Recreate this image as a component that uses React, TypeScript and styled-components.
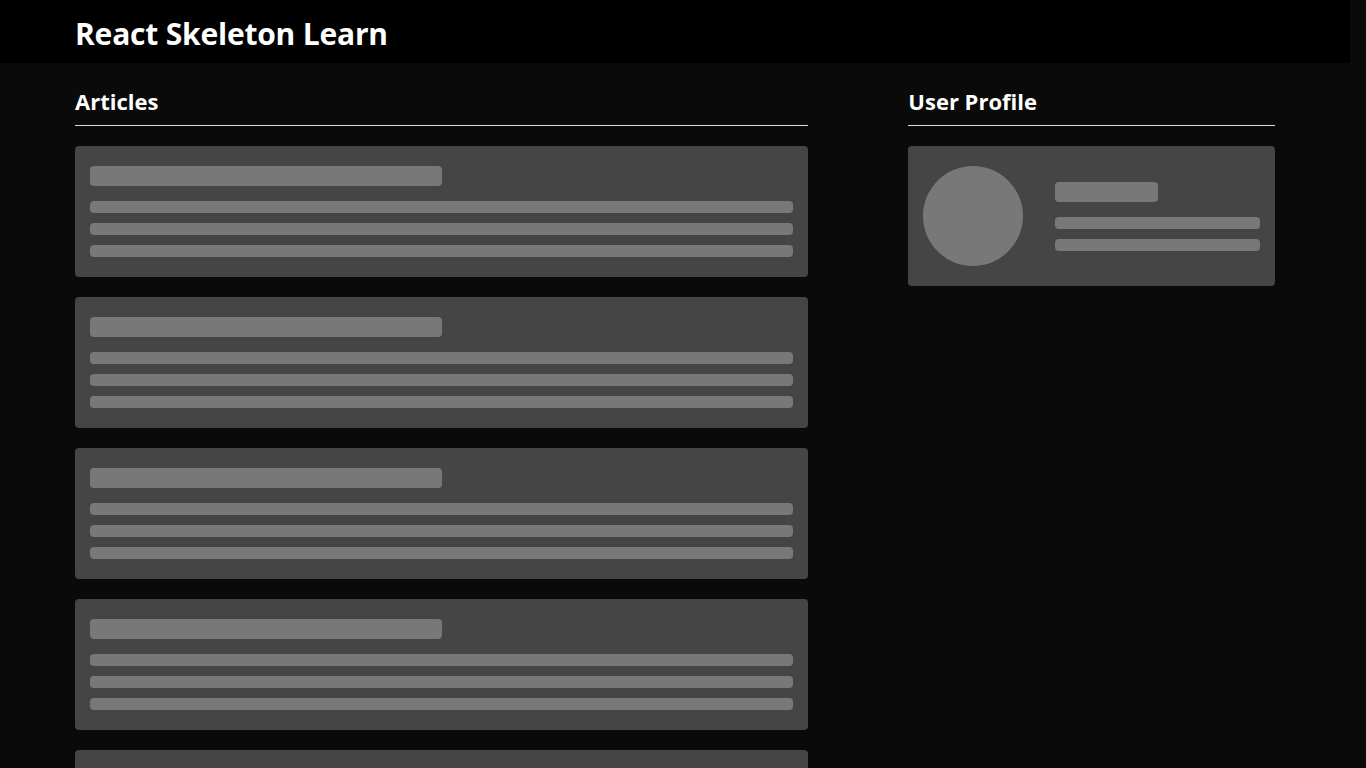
import * as React from "react";
import styled, { createGlobalStyle } from "styled-components";

const GlobalStyle = createGlobalStyle`
  html, body {
    margin: 0;
    padding: 0;
    background: #0a0a0a;
    color: #fff;
    font-family: "Open Sans", "Noto Sans", "Liberation Sans", sans-serif;
  }
`;

const ARTICLE_COUNT = 8;

function ArticleSkeleton() {
  return (
    <Card>
      <Bone $variant="title" />
      <Bone $variant="text" />
      <Bone $variant="text" />
      <Bone $variant="text" />
    </Card>
  );
}

function ProfileSkeleton() {
  return (
    <ProfileCard>
      <Bone $variant="avatar" />
      <ProfileInfo>
        <Bone $variant="title" />
        <Bone $variant="text" />
        <Bone $variant="text" />
      </ProfileInfo>
    </ProfileCard>
  );
}

export default function App() {
  return (
    <Page>
      <GlobalStyle />
      <Header>
        <HeaderInner>
          <Brand>React Skeleton Learn</Brand>
        </HeaderInner>
      </Header>
      <Content>
        <Column>
          <SectionTitle>Articles</SectionTitle>
          <List>
            {Array.from({ length: ARTICLE_COUNT }, (_, i) => (
              <ArticleSkeleton key={i} />
            ))}
          </List>
        </Column>
        <Column>
          <SectionTitle>User Profile</SectionTitle>
          <List>
            <ProfileSkeleton />
          </List>
        </Column>
      </Content>
    </Page>
  );
}

// reference was taken with a 16px classic scrollbar eating the right edge
const Page = styled.div`
  width: calc(100vw - 16px);
`;

const Header = styled.header`
  background: #000;
  height: 63px;
  display: flex;
  align-items: center;
`;

const HeaderInner = styled.div`
  width: 1200px;
  margin: 0 auto;
`;

const Brand = styled.h1`
  margin: 0;
  font-size: 30px;
  font-weight: 700;
  letter-spacing: -0.2px;
  line-height: 1;
  padding-top: 4px;
`;

const Content = styled.main`
  width: 1200px;
  margin: 0 auto;
  padding: 22px 0 20px;
  display: grid;
  grid-template-columns: 2fr 1fr;
  column-gap: 100px;
  align-items: start;
`;

const Column = styled.section`
  display: flex;
  flex-direction: column;
`;

const SectionTitle = styled.h2`
  margin: 0;
  height: 32px;
  line-height: 32px;
  padding-bottom: 8px;
  border-bottom: 1px solid #ddd;
  font-size: 22px;
  font-weight: 700;
  letter-spacing: 0;
`;

const List = styled.div`
  margin-top: 20px;
  display: flex;
  flex-direction: column;
  gap: 20px;
`;

const Card = styled.div`
  background: #454545;
  border-radius: 4px;
  padding: 20px 15px;
  height: 131px;
  box-sizing: border-box;
  display: flex;
  flex-direction: column;
  gap: 10px;

  & > :first-child {
    margin-bottom: 5px;
  }
`;

const ProfileCard = styled.div`
  background: #454545;
  border-radius: 4px;
  padding: 20px 15px;
  display: flex;
  align-items: center;
  gap: 32px;
`;

const ProfileInfo = styled.div`
  flex: 1;
  display: flex;
  flex-direction: column;
  gap: 10px;

  & > :first-child {
    margin-bottom: 5px;
  }
`;

const Bone = styled.div<{ $variant: "title" | "text" | "avatar" }>`
  background: #787878;
  border-radius: 4px;
  flex-shrink: 0;
  ${({ $variant }) =>
    $variant === "title"
      ? "width: 50%; height: 20px;"
      : $variant === "text"
      ? "width: 100%; height: 12px;"
      : "width: 100px; height: 100px; border-radius: 50%;"}
`;
